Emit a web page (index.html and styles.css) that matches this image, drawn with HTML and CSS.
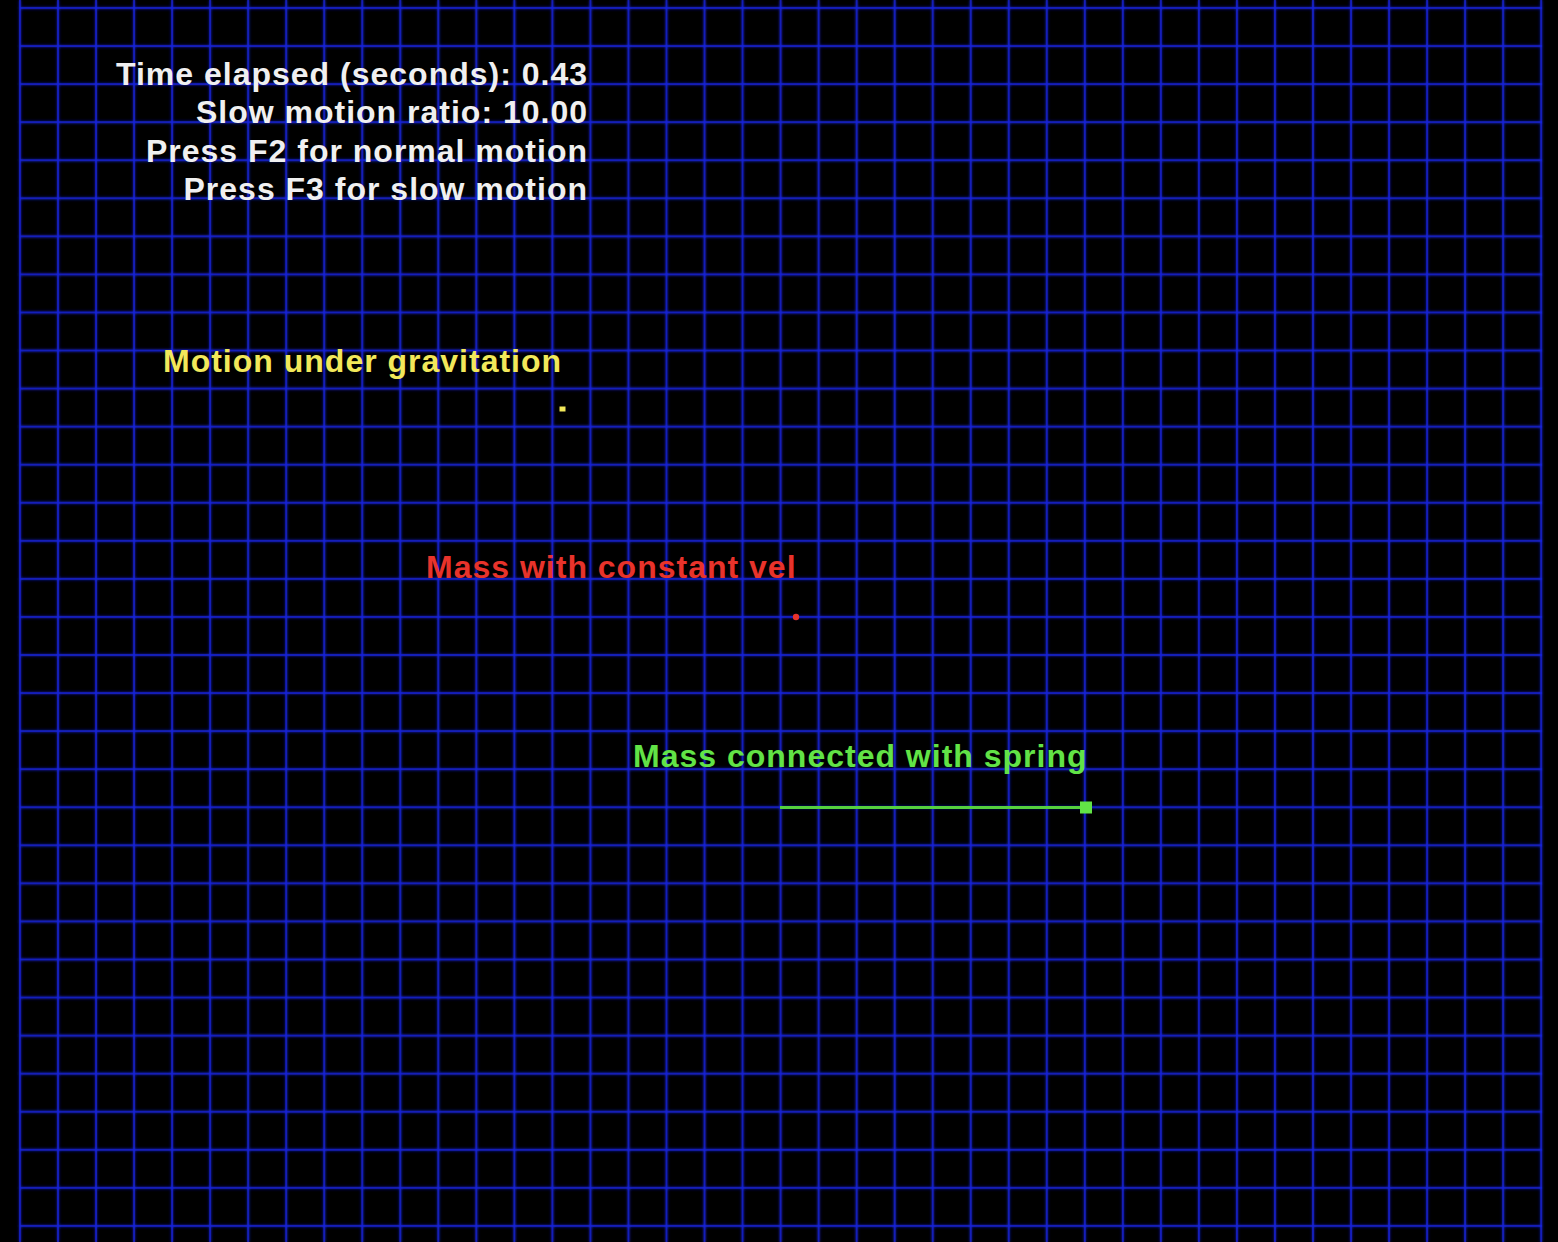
FILE: index.html
```html
<!DOCTYPE html>
<html lang="en">
<head>
<meta charset="utf-8">
<title>Motion simulation</title>
<link rel="stylesheet" href="styles.css">
</head>
<body>
<main class="scene">
  <svg class="canvas" width="1558" height="1242" viewBox="0 0 1558 1242" xmlns="http://www.w3.org/2000/svg">
    <defs>
      <pattern id="vlines" patternUnits="userSpaceOnUse" x="19" y="0" width="38.03" height="1242">
        <rect class="grid-stroke" x="0" y="0" width="2" height="1242"/>
      </pattern>
      <pattern id="hlines" patternUnits="userSpaceOnUse" x="0" y="7" width="1558" height="38.06">
        <rect class="grid-stroke" x="0" y="0" width="1558" height="2"/>
      </pattern>
      <filter id="glow" x="-5%" y="-5%" width="110%" height="110%">
        <feGaussianBlur in="SourceGraphic" stdDeviation="1.4" result="b"/>
        <feMerge>
          <feMergeNode in="b"/>
          <feMergeNode in="SourceGraphic"/>
        </feMerge>
      </filter>
    </defs>

    <g class="grid" filter="url(#glow)">
      <rect x="19" y="0" width="1524" height="1242" fill="url(#vlines)"/>
      <rect x="20" y="7" width="1522" height="1224" fill="url(#hlines)"/>
    </g>

    <g class="hud">
      <text class="hud-line" x="588" y="85">Time elapsed (seconds): 0.43</text>
      <text class="hud-line" x="588" y="123">Slow motion ratio: 10.00</text>
      <text class="hud-line" x="588" y="162">Press F2 for normal motion</text>
      <text class="hud-line" x="588" y="200">Press F3 for slow motion</text>
    </g>

    <g class="body body-gravity">
      <text class="label" x="163" y="372">Motion under gravitation</text>
      <rect class="mass" x="559.5" y="406.5" width="6" height="5"/>
    </g>

    <g class="body body-velocity">
      <text class="label" x="426" y="578">Mass with constant vel</text>
      <circle class="mass" cx="796" cy="617" r="3.2"/>
    </g>

    <g class="body body-spring">
      <text class="label" x="633" y="767">Mass connected with spring</text>
      <rect class="spring" x="780" y="806" width="306" height="3"/>
      <rect class="mass" x="1080" y="801.5" width="12" height="12"/>
    </g>
  </svg>
</main>
</body>
</html>
```

FILE: styles.css
```css
html, body {
  margin: 0;
  padding: 0;
  background: #000;
}

.scene {
  width: 1558px;
  height: 1242px;
  overflow: hidden;
  background: #000;
}

.canvas {
  display: block;
}

.grid-stroke {
  fill: rgba(24, 36, 225, 0.72);
}

.hud-line,
.label {
  font-family: "Liberation Sans", Arial, sans-serif;
  font-weight: 700;
  font-size: 32px;
  letter-spacing: 1px;
}

.hud-line {
  fill: #f0f0f0;
  text-anchor: end;
}

.body-gravity .label,
.body-gravity .mass {
  fill: #f2e85a;
}

.body-velocity .label,
.body-velocity .mass {
  fill: #e8332b;
}

.body-spring .label,
.body-spring .mass {
  fill: #62e346;
}

.spring {
  fill: #55d03e;
}
```
